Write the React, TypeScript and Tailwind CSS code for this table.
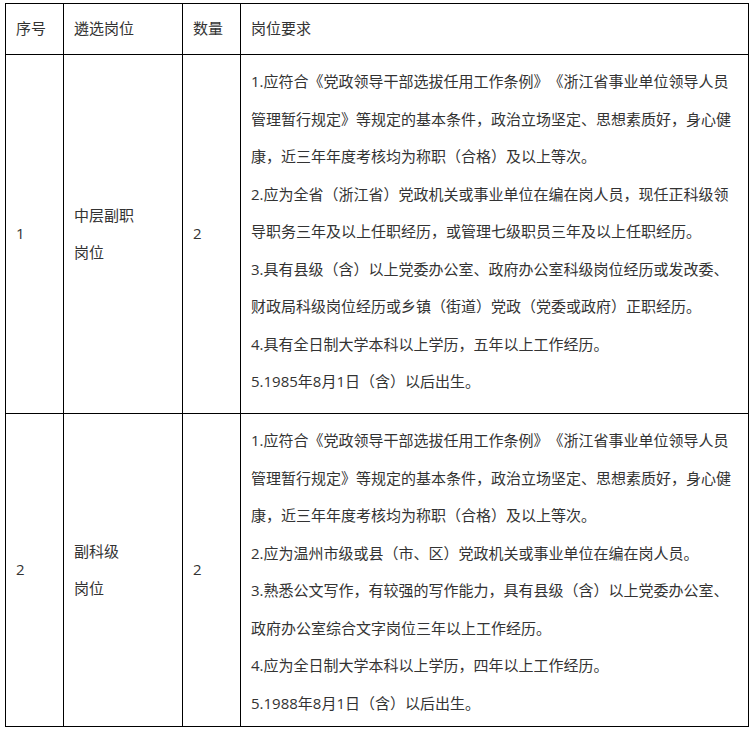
import React from 'react';

type Post = {
  no: string;
  title: string[];
  count: string;
  lines: string[];
};

const posts: Post[] = [
  {
    no: '1',
    title: ['中层副职', '岗位'],
    count: '2',
    lines: [
      '1.应符合《党政领导干部选拔任用工作条例》《浙江省事业单位领导人员',
      '管理暂行规定》等规定的基本条件，政治立场坚定、思想素质好，身心健',
      '康，近三年年度考核均为称职（合格）及以上等次。',
      '2.应为全省（浙江省）党政机关或事业单位在编在岗人员，现任正科级领',
      '导职务三年及以上任职经历，或管理七级职员三年及以上任职经历。',
      '3.具有县级（含）以上党委办公室、政府办公室科级岗位经历或发改委、',
      '财政局科级岗位经历或乡镇（街道）党政（党委或政府）正职经历。',
      '4.具有全日制大学本科以上学历，五年以上工作经历。',
      '5.1985年8月1日（含）以后出生。',
    ],
  },
  {
    no: '2',
    title: ['副科级', '岗位'],
    count: '2',
    lines: [
      '1.应符合《党政领导干部选拔任用工作条例》《浙江省事业单位领导人员',
      '管理暂行规定》等规定的基本条件，政治立场坚定、思想素质好，身心健',
      '康，近三年年度考核均为称职（合格）及以上等次。',
      '2.应为温州市级或县（市、区）党政机关或事业单位在编在岗人员。',
      '3.熟悉公文写作，有较强的写作能力，具有县级（含）以上党委办公室、',
      '政府办公室综合文字岗位三年以上工作经历。',
      '4.应为全日制大学本科以上学历，四年以上工作经历。',
      '5.1988年8月1日（含）以后出生。',
    ],
  },
];

const cell = 'border-l border-t border-black pl-[10px] pr-[8px]';

export default function App() {
  return (
    <div className="w-[754px] h-[732px] bg-white pt-[3px] pl-[5px] font-['Segoe_UI','Open_Sans','Noto_Sans_CJK_SC',sans-serif] text-[15px] leading-[37.5px] text-[#333] [text-spacing-trim:space-all]">
      <div className="grid grid-cols-[58px_119px_58px_508px] grid-rows-[51px_359px_313px] w-[744px] border-r border-b border-black">
        {/* header */}
        <div className={`${cell} flex items-center`}>序号</div>
        <div className={`${cell} flex items-center`}>遴选岗位</div>
        <div className={`${cell} flex items-center`}>数量</div>
        <div className={`${cell} flex items-center`}>岗位要求</div>

        {posts.map((p) => (
          <React.Fragment key={p.no}>
            <div className={`${cell} flex items-center`}>{p.no}</div>
            <div className={`${cell} flex flex-col justify-center`}>
              {p.title.map((t) => (
                <div key={t}>{t}</div>
              ))}
            </div>
            <div className={`${cell} flex items-center`}>{p.count}</div>
            <div className={`${cell} pt-[8px]`}>
              {p.lines.map((l) => (
                <div key={l} className="whitespace-nowrap">
                  {l}
                </div>
              ))}
            </div>
          </React.Fragment>
        ))}
      </div>
    </div>
  );
}
